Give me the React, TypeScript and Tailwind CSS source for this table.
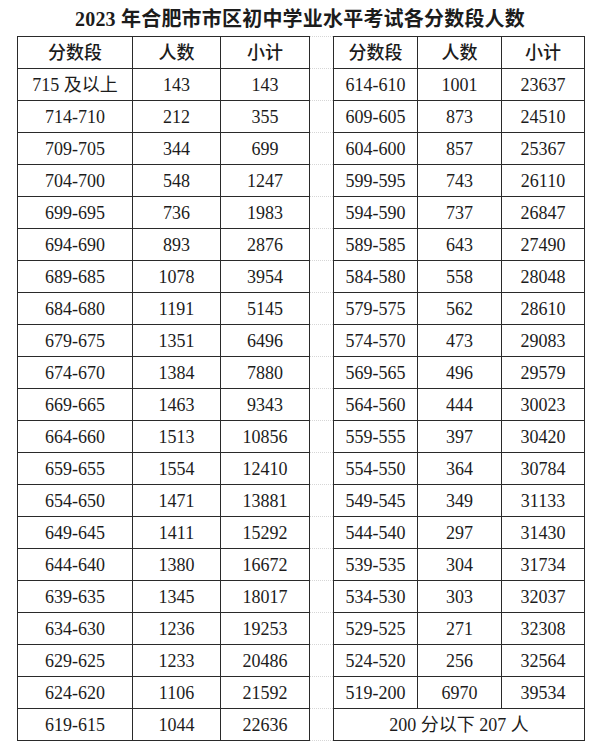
import React from "react";

const leftRows: string[][] = [
    ["715 及以上", "143", "143"],
    ["714-710", "212", "355"],
    ["709-705", "344", "699"],
    ["704-700", "548", "1247"],
    ["699-695", "736", "1983"],
    ["694-690", "893", "2876"],
    ["689-685", "1078", "3954"],
    ["684-680", "1191", "5145"],
    ["679-675", "1351", "6496"],
    ["674-670", "1384", "7880"],
    ["669-665", "1463", "9343"],
    ["664-660", "1513", "10856"],
    ["659-655", "1554", "12410"],
    ["654-650", "1471", "13881"],
    ["649-645", "1411", "15292"],
    ["644-640", "1380", "16672"],
    ["639-635", "1345", "18017"],
    ["634-630", "1236", "19253"],
    ["629-625", "1233", "20486"],
    ["624-620", "1106", "21592"],
    ["619-615", "1044", "22636"],
];

const rightRows: string[][] = [
    ["614-610", "1001", "23637"],
    ["609-605", "873", "24510"],
    ["604-600", "857", "25367"],
    ["599-595", "743", "26110"],
    ["594-590", "737", "26847"],
    ["589-585", "643", "27490"],
    ["584-580", "558", "28048"],
    ["579-575", "562", "28610"],
    ["574-570", "473", "29083"],
    ["569-565", "496", "29579"],
    ["564-560", "444", "30023"],
    ["559-555", "397", "30420"],
    ["554-550", "364", "30784"],
    ["549-545", "349", "31133"],
    ["544-540", "297", "31430"],
    ["539-535", "304", "31734"],
    ["534-530", "303", "32037"],
    ["529-525", "271", "32308"],
    ["524-520", "256", "32564"],
    ["519-200", "6970", "39534"],
];

const cell = "border border-[#2a2a2a] text-center align-middle h-[32px] p-0";
const gap = "border-y border-dotted border-y-[#d6d6d6] border-x-0 p-0";

export default function App() {
    const headers = ["分数段", "人数", "小计"];

    return (
        <div
            className="w-[600px] h-[753px] bg-white text-[#1c1c1c]"
            style={{ fontFamily: '"Liberation Serif", "Noto Sans CJK SC", serif' }}
        >
            {/* Title */}
            <div className="h-[36px] flex items-center justify-center text-[20px] font-bold tracking-[0.2px] pt-[1px]">
                2023 年合肥市市区初中学业水平考试各分数段人数
            </div>

            {/* Two side-by-side tables in one grid */}
            <table className="ml-[17px] border-collapse text-[18px] leading-none table-fixed">
                <colgroup>
                    <col className="w-[115px]" />
                    <col className="w-[88px]" />
                    <col className="w-[89px]" />
                    <col className="w-[24px]" />
                    <col className="w-[84px]" />
                    <col className="w-[84px]" />
                    <col className="w-[83px]" />
                </colgroup>
                <tbody>
                    <tr>
                        {headers.map((h, i) => (
                            <td key={"l" + i} className={cell + " font-medium"}>
                                {h}
                            </td>
                        ))}
                        <td className={gap} />
                        {headers.map((h, i) => (
                            <td key={"r" + i} className={cell + " font-medium"}>
                                {h}
                            </td>
                        ))}
                    </tr>
                    {leftRows.map((row, i) => {
                        const right = rightRows[i];
                        return (
                            <tr key={i}>
                                {row.map((v, j) => (
                                    <td key={"l" + j} className={cell}>
                                        {v}
                                    </td>
                                ))}
                                <td className={gap} />
                                {right ? (
                                    right.map((v, j) => (
                                        <td key={"r" + j} className={cell}>
                                            {v}
                                        </td>
                                    ))
                                ) : (
                                    <td colSpan={3} className={cell}>
                                        200 分以下 207 人
                                    </td>
                                )}
                            </tr>
                        );
                    })}
                </tbody>
            </table>
        </div>
    );
}
